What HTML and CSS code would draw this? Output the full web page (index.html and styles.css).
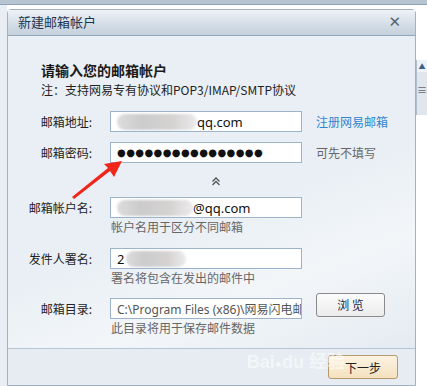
FILE: index.html
```html
<!DOCTYPE html>
<html lang="zh-CN">
<head>
  <meta charset="UTF-8" />
  <title>新建邮箱帐户</title>
  <link rel="stylesheet" href="styles.css">
</head>
<body>
  <div class="topbar"></div>
  <div class="desk">
    <div class="leftstrip"><div class="tab"></div></div>

    <div class="dialog">
      <div class="titlebar">
        <span class="title">新建邮箱帐户</span>
        <span class="close">✕</span>
      </div>

      <div class="content">
        <h2>请输入您的邮箱帐户</h2>
        <p class="note">注：支持网易专有协议和POP3/IMAP/SMTP协议</p>

        <div class="row">
          <label>邮箱地址:</label>
          <div class="field"><span class="blur b1"></span><span class="val">qq.com</span></div>
          <a class="side link">注册网易邮箱</a>
        </div>

        <div class="row">
          <label>邮箱密码:</label>
          <div class="field"><span class="dots">●●●●●●●●●●●●●●●●</span></div>
          <span class="side">可先不填写</span>
        </div>

        <div class="toggle">
          <svg width="10" height="9" viewBox="0 0 10 9">
            <path d="M1.5 4.5 L5 1 L8.5 4.5 M1.5 8 L5 4.5 L8.5 8" fill="none" stroke="#555" stroke-width="1.3"/>
          </svg>
        </div>

        <div class="row">
          <label>邮箱帐户名:</label>
          <div class="field"><span class="blur b2"></span><span class="val">@qq.com</span></div>
        </div>
        <p class="hint first">帐户名用于区分不同邮箱</p>

        <div class="row">
          <label>发件人署名:</label>
          <div class="field"><span class="val">2</span><span class="blur b3"></span></div>
        </div>
        <p class="hint">署名将包含在发出的邮件中</p>

        <div class="row">
          <label>邮箱目录:</label>
          <div class="field"><span class="path">C:\Program Files (x86)\网易闪电邮</span></div>
          <button class="browse">浏 览</button>
        </div>
        <p class="hint">此目录将用于保存邮件数据</p>

        <svg class="arrow" width="70" height="50" viewBox="0 0 70 50">
          <path d="M62 8 L44 11 L48 15 L12 44 L14 46 L50 18 L54 24 Z" fill="#f0261a"/>
        </svg>
      </div>

      <div class="footer">
        <span class="mark">Bai<span class="paw">●</span>du 经验</span>
        <button class="next">下一步</button>
      </div>
    </div>

    <div class="rightstrip">
      <div class="scroll">
        <span class="up">▲</span>
        <span class="thumb">≡</span>
      </div>
    </div>
  </div>
</body>
</html>
```

FILE: styles.css
```css
* {
  box-sizing: border-box;
}
body {
  margin: 0;
  width: 427px;
  height: 386px;
  overflow: hidden;
  background: #e6ecf1;
  font-family: "Noto Sans CJK SC", "Noto Sans", sans-serif;
  font-size: 12px;
  color: #222;
}
.topbar {
  height: 5px;
  background: #b7c5d3;
  border-bottom: 1px solid #8ea3b8;
}
.desk {
  display: flex;
  height: 381px;
  background: #fff;
}
.leftstrip {
  width: 7px;
  background: #e8eef3;
}
.tab {
  height: 30px;
}
.dialog {
  width: 409px;
  margin-top: 4px;
  display: flex;
  flex-direction: column;
  border: 1px solid #9fb2c6;
  border-radius: 4px 4px 0 0;
  background: #e9eff4;
}
.titlebar {
  height: 27px;
  display: flex;
  align-items: center;
  justify-content: space-between;
  padding: 0 14px 2px 10px;
  background: linear-gradient(#eef2f6, #d3dde7 60%, #c4d0dc);
  border-bottom: 1px solid #93a9bf;
}
.title {
  font-size: 13px;
  color: #1c3553;
}
.close {
  font-size: 15px;
  color: #5a6370;
  font-family: "DejaVu Sans", sans-serif;
}
.content {
  position: relative;
  flex: 1;
  padding: 25px 0 0 0;
  background: linear-gradient(160deg, #e9eff4 55%, #f3f6f9 75%, #e4ebf1);
  border-bottom: 1px solid #b6c6d6;
}
.content h2 {
  margin: 0 0 2px 33px;
  font-size: 14px;
  font-weight: bold;
  color: #1a1a1a;
  line-height: 18px;
}
.note {
  margin: 0 0 12px 33px;
  line-height: 18px;
  color: #222;
}
.row {
  display: flex;
  align-items: center;
  height: 21px;
  margin-bottom: 10px;
}
.row label {
  width: 102px;
  text-align: right;
  padding-right: 18px;
  color: #222;
}
.field {
  width: 192px;
  height: 21px;
  background: #fff;
  border: 1px solid #9bb3cb;
  display: flex;
  align-items: center;
  padding-left: 6px;
  overflow: hidden;
  white-space: nowrap;
  font-family: "Noto Sans", sans-serif;
  font-size: 13px;
  color: #111;
}
.blur {
  display: inline-block;
  height: 16px;
  background: linear-gradient(90deg, #ddd, #ccc 30%, #d6d2d2 70%, #ececec);
  border-radius: 8px;
  filter: blur(1px);
}
.b1 { width: 80px; }
.b2 { width: 76px; }
.b3 { width: 60px; margin-left: 2px; }
.dots {
  font-size: 10px;
  letter-spacing: 0.4px;
  font-family: "DejaVu Sans", sans-serif;
}
.path {
  font-size: 12px;
  color: #555;
  font-family: "Noto Sans", "Noto Sans CJK SC", sans-serif;
}
.side {
  margin-left: 14px;
  color: #666;
}
.link {
  color: #2f86cf;
}
.toggle {
  height: 24px;
  margin: -4px 0 4px 203px;
  display: flex;
  align-items: center;
}
.hint {
  margin: -10px 0 11px 103px;
  line-height: 18px;
  color: #666;
}
.hint.first {
  margin-bottom: 12px;
}
.browse {
  margin-left: 14px;
  margin-top: -8px;
  width: 69px;
  height: 24px;
  border: 1px solid #8a8a8a;
  border-radius: 3px;
  background: linear-gradient(#fbfbfb, #ececec);
  font-family: "Noto Sans CJK SC", sans-serif;
  font-size: 12px;
  color: #1a2a4a;
}
.arrow {
  position: absolute;
  left: 52px;
  top: 117px;
}
.footer {
  height: 37px;
  position: relative;
  display: flex;
  justify-content: flex-end;
  align-items: center;
  padding-right: 17px;
  background: #e6ecf1;
}
.mark {
  position: absolute;
  right: 70px;
  top: -2px;
  font-size: 18px;
  font-weight: bold;
  color: rgba(255, 255, 255, 0.55);
  font-family: "Liberation Sans", "Noto Sans CJK SC", sans-serif;
}
.paw {
  font-size: 12px;
}
.next {
  width: 70px;
  height: 24px;
  border: 1px solid #b69a6e;
  border-radius: 3px;
  background: linear-gradient(#fdf3e2, #f4e1bf);
  font-family: "Noto Sans CJK SC", sans-serif;
  font-size: 12px;
  color: #222;
}
.rightstrip {
  flex: 1;
  background: #fff;
  padding-top: 55px;
}
.scroll {
  width: 11px;
  height: 55px;
  display: flex;
  flex-direction: column;
  align-items: center;
  border-left: 1px solid #b0bfcf;
  background: #eef2f5;
}
.up {
  font-size: 7px;
  color: #3f5f86;
  height: 12px;
  line-height: 12px;
}
.thumb {
  flex: 1;
  width: 100%;
  background: #dfe6ec;
  color: #667;
  font-size: 10px;
  text-align: center;
  line-height: 36px;
}
```
